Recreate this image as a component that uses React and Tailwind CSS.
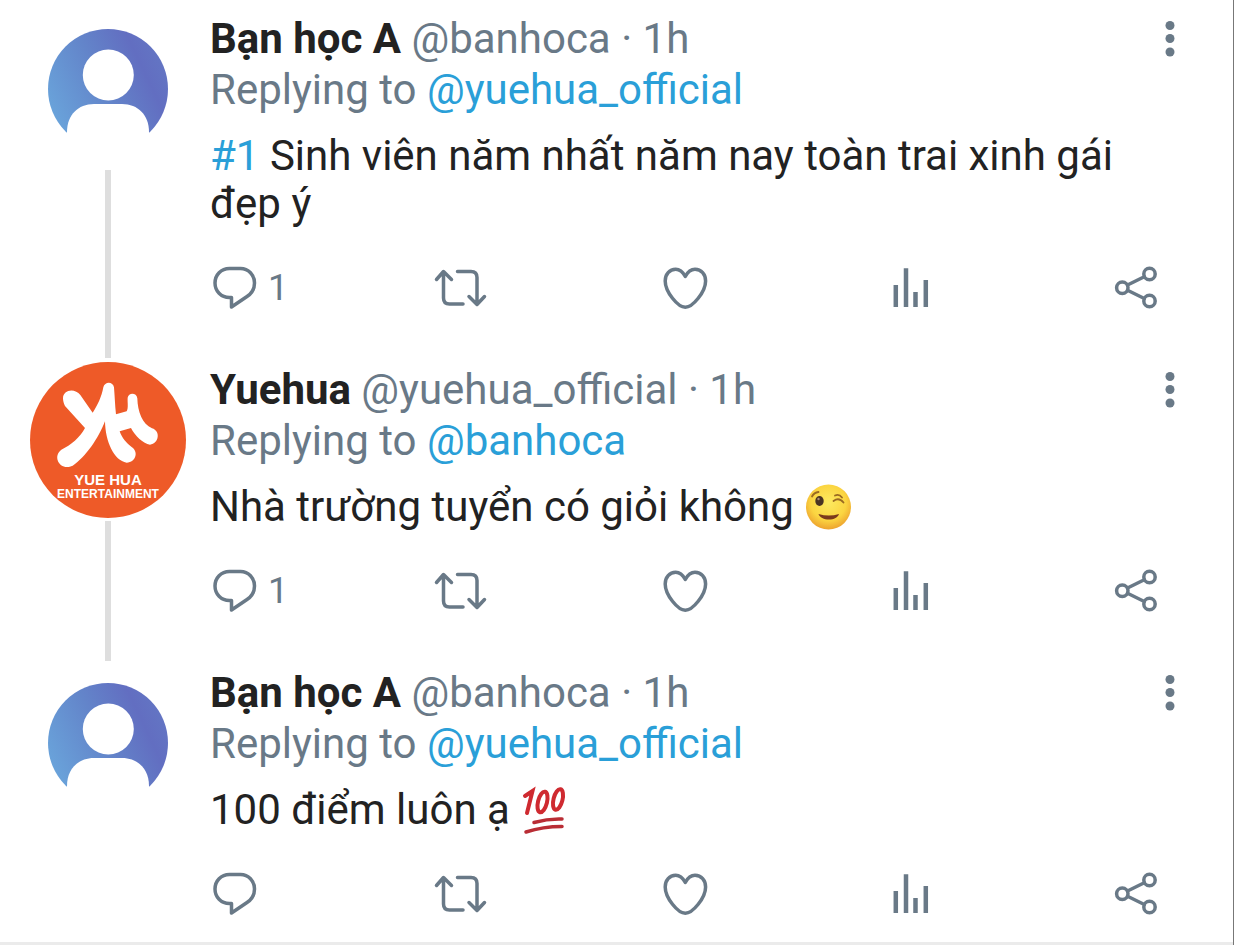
const posts = [
  {
    id: 1,
    name: "Bạn học A",
    handle: "@banhoca",
    time: "1h",
    replyTo: "@yuehua_official",
    tag: "#1",
    text: "Sinh viên năm nhất năm nay toàn trai xinh gái đẹp ý",
    replies: 1,
    avatar: "person",
  },
  {
    id: 2,
    name: "Yuehua",
    handle: "@yuehua_official",
    time: "1h",
    replyTo: "@banhoca",
    text: "Nhà trường tuyển có giỏi không",
    emoji: "wink",
    replies: 1,
    avatar: "yuehua",
  },
  {
    id: 3,
    name: "Bạn học A",
    handle: "@banhoca",
    time: "1h",
    replyTo: "@yuehua_official",
    text: "100 điểm luôn ạ",
    emoji: "hundred",
    replies: 0,
    avatar: "person",
  },
];

const PersonAvatar = ({ id }) => (
  <svg viewBox="0 0 156 156" className="size-[156px]" role="img" aria-label="Avatar">
    <defs>
      <linearGradient id={`sky-${id}`} x1="0" y1="0.75" x2="0.95" y2="0.3">
        <stop offset="0" stopColor="#6aa6dc" />
        <stop offset="0.5" stopColor="#6385ca" />
        <stop offset="0.85" stopColor="#626ec1" />
        <stop offset="1" stopColor="#6374c3" />
      </linearGradient>
    </defs>
    <circle cx="78" cy="78" r="60" fill={`url(#sky-${id})`} />
    <circle cx="78.3" cy="64" r="25.5" fill="#fff" />
    <path d="M37 156v-35c0-17 11-28 27-28h28c16 0 27 11 27 28v35z" fill="#fff" />
  </svg>
);

const YuehuaAvatar = () => (
  <svg viewBox="0 0 156 156" className="size-[156px]" role="img" aria-label="Yue Hua Entertainment">
    <circle cx="78" cy="78" r="78" fill="#ee5a28" />
    <g transform="translate(-10 -12) scale(0.3333)">
      <path
        d="M129 145C129 118 165 113 181 135L218 188C232 168 245 140 250 112C254 94 279 94 282 112C284 135 285 165 288 193L320 184C326 173 322 158 323 143C326 127 350 128 352 145C353 185 367 223 396 235C423 243 417 281 390 284C370 282 345 257 333 234L299 244C306 264 320 280 334 290C357 305 348 336 320 338C282 332 256 275 255 214C235 265 197 322 158 347C120 364 96 320 124 299C153 286 180 262 195 234L135 168C131 160 129 152 129 145Z"
        fill="#fff"
      />
    </g>
    <text x="78" y="123" textAnchor="middle" fill="#fff" className="font-['Liberation_Sans',sans-serif] text-[15px] font-bold">
      YUE HUA
    </text>
    <text x="78" y="136" textAnchor="middle" fill="#fff" className="font-['Liberation_Sans',sans-serif] text-[12px] font-bold">
      ENTERTAINMENT
    </text>
  </svg>
);

const Wink = () => (
  <svg viewBox="0 0 50 50" className="-my-1 inline-block size-[50px] align-[-7px]" role="img" aria-label="😉">
    <defs>
      <radialGradient id="face" cx="0.5" cy="0.4" r="0.6">
        <stop offset="0" stopColor="#fdea60" />
        <stop offset="0.65" stopColor="#fbd541" />
        <stop offset="1" stopColor="#eda32f" />
      </radialGradient>
    </defs>
    <circle cx="24.5" cy="25" r="22.5" fill="url(#face)" />
    <ellipse cx="15.5" cy="19" rx="4.2" ry="5" fill="#4a3323" />
    <circle cx="14.5" cy="17" r="1.2" fill="#a98d6f" />
    <path d="M8 14.5q2-4 6.500-4.500" fill="none" stroke="#9a6a22" strokeWidth="1.8" strokeLinecap="round" />
    <path d="M29.500 19q5.500-4 10 1.500M31 13.500q4-2 7 2" fill="none" stroke="#9a6a22" strokeWidth="1.8" strokeLinecap="round" />
    <path d="M14.500 32q10.500 3 20.500 0c-1 3.500-5 5.500-10 5.500s-9.500-2-10.500-5.500z" fill="#7b3a1c" />
  </svg>
);

const Hundred = () => (
  <svg
    viewBox="0 0 50 50"
    className="-my-1 inline-block size-[50px] align-[-7px]"
    fill="none"
    stroke="#cf2a30"
    strokeWidth="4"
    strokeLinecap="round"
    role="img"
    aria-label="💯"
  >
    <polyline points="5,11 12.5,6 7,28" />
    <ellipse cx="22.5" cy="17" rx="4.500" ry="10.500" transform="rotate(14 22.5 17)" />
    <ellipse cx="38" cy="14.500" rx="4.500" ry="10.500" transform="rotate(14 38 14.5)" />
    <path d="M14 37.500q14-4 28-3.500M6 47q17-5.500 36-5.500" stroke="#b92d35" strokeWidth="3.500" />
  </svg>
);

const Icon = ({ children }) => (
  <svg
    viewBox="0 0 50 50"
    className="size-[50px] shrink-0 overflow-visible"
    fill="none"
    stroke="currentColor"
    strokeWidth="3.5"
    strokeLinejoin="round"
    strokeLinecap="round"
    aria-hidden="true"
  >
    {children}
  </svg>
);

const Actions = ({ replies }) => (
  <div className="mt-[35px] flex pr-[14px]">
    <button type="button" aria-label="Reply" className="flex flex-1 items-center gap-2">
      <Icon>
        <path d="M19.500 5.500h11c8 0 14 6.500 14 14.500 0 6-3 10.500-7.500 13.500L21.500 44v-9.500h-2C11 34.500 5 28 5 20S11 5.500 19.500 5.500z" />
      </Icon>
      {replies > 0 && <span className="text-[36px] leading-[50px]">{replies}</span>}
    </button>
    <button type="button" aria-label="Retweet" className="flex flex-1 items-center">
      <Icon>
        <path d="M1.500 16.500L8.500 8.500L16.500 16.500M8.500 9v26q0 6 6 6h13.500" />
        <path d="M22.500 8.500h13.500q6 0 6 6v27M34 33.500L42 41.500L49.500 33.500" />
      </Icon>
    </button>
    <button type="button" aria-label="Like" className="flex flex-1 items-center">
      <Icon>
        <path d="M24.300 13.500C21.500 8.500 18.500 6.300 14.700 6.300C8.500 6.300 4.200 11.500 4.200 18C4.200 29 17 44.300 24.300 44.300S44.600 29 44.600 18C44.600 11.500 40.300 6.300 34 6.300C30.300 6.300 27 8.500 24.300 13.500Z" />
      </Icon>
    </button>
    <button type="button" aria-label="View activity" className="flex flex-1 items-center">
      <Icon>
        <path d="M9.800 22v22M20 5.300v38.700M29.500 29v15M39.800 17v27" strokeWidth="4.500" strokeLinecap="butt" />
      </Icon>
    </button>
    <button type="button" aria-label="Share">
      <Icon>
        <circle cx="11.300" cy="24.700" r="5.700" />
        <circle cx="38.500" cy="11" r="5.700" />
        <circle cx="38.500" cy="38" r="5.700" />
        <path d="M16.500 22L33.300 13.700M16.500 27.300L33.300 35.500" />
      </Icon>
    </button>
  </div>
);

const Post = ({ post, last }) => (
  <article className="flex gap-6">
    {/* Avatar and thread line */}
    <div className="flex w-[156px] shrink-0 flex-col items-center gap-[3px] pt-1">
      {post.avatar === "yuehua" ? <YuehuaAvatar /> : <PersonAvatar id={post.id} />}
      {!last && <div className="w-[6px] flex-1 bg-[#dedede]" />}
    </div>

    <div className={`min-w-0 flex-1 pt-[6px] ${last ? "pb-[23px]" : "pb-[45px]"}`}>
      <header className="flex items-center justify-between leading-[51px]">
        <p>
          <strong className="font-bold text-[#222]">{post.name}</strong> {post.handle} · {post.time}
        </p>
        <button type="button" aria-label="More">
          <svg viewBox="0 0 10 36" className="h-9 w-[10px]" fill="currentColor" aria-hidden="true">
            <circle cx="5" cy="4.500" r="4.500" />
            <circle cx="5" cy="17.500" r="4.500" />
            <circle cx="5" cy="31" r="4.500" />
          </svg>
        </button>
      </header>
      <p className="leading-[51px]">
        Replying to <a href="#" className="text-[#2a9fd8]">{post.replyTo}</a>
      </p>
      <p className="mt-[17px] pr-[14px] leading-[48px] text-[#222]">
        {post.tag && <a href="#" className="text-[#2a9fd8]">{post.tag}</a>} {post.text}
        {post.emoji && " "}
        {post.emoji === "wink" && <Wink />}
        {post.emoji === "hundred" && <Hundred />}
      </p>
      <Actions replies={post.replies} />
    </div>
  </article>
);

export default function App() {
  return (
    <div className="border-r border-[#777] bg-white font-[Roboto,sans-serif] text-[42px] text-[#697987]">
      <main className="border-b-[3px] border-[#ebebeb] pt-[7px] pr-[58px] pl-[30px]">
        {posts.map((post, i) => (
          <Post key={post.id} post={post} last={i === posts.length - 1} />
        ))}
      </main>
    </div>
  );
}
